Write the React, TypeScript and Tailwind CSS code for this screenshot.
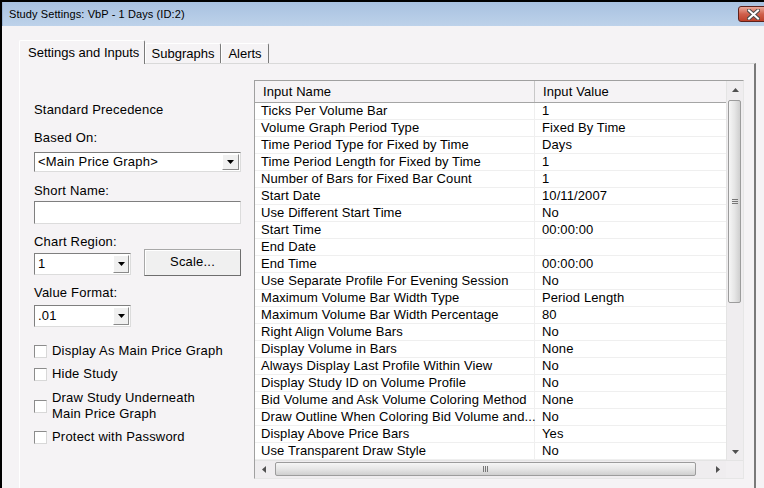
import React from "react";

const rows: [string, string][] = [
  ["Ticks Per Volume Bar", "1"],
  ["Volume Graph Period Type", "Fixed By Time"],
  ["Time Period Type for Fixed by Time", "Days"],
  ["Time Period Length for Fixed by Time", "1"],
  ["Number of Bars for Fixed Bar Count", "1"],
  ["Start Date", "10/11/2007"],
  ["Use Different Start Time", "No"],
  ["Start Time", "00:00:00"],
  ["End Date", ""],
  ["End Time", "00:00:00"],
  ["Use Separate Profile For Evening Session", "No"],
  ["Maximum Volume Bar Width Type", "Period Length"],
  ["Maximum Volume Bar Width Percentage", "80"],
  ["Right Align Volume Bars", "No"],
  ["Display Volume in Bars", "None"],
  ["Always Display Last Profile Within View", "No"],
  ["Display Study ID on Volume Profile", "No"],
  ["Bid Volume and Ask Volume Coloring Method", "None"],
  ["Draw Outline When Coloring Bid Volume and...", "No"],
  ["Display Above Price Bars", "Yes"],
  ["Use Transparent Draw Style", "No"],
];

function Tri({ dir, color = "#000" }: { dir: "up" | "down" | "left" | "right"; color?: string }) {
  const pts =
    dir === "down"
      ? "0,0 7,0 3.5,4"
      : dir === "up"
      ? "0,4 7,4 3.5,0"
      : dir === "left"
      ? "4,0 4,7 0,3.5"
      : "0,0 0,7 4,3.5";
  const w = dir === "up" || dir === "down" ? 7 : 4;
  const h = dir === "up" || dir === "down" ? 4 : 7;
  return (
    <svg width={w} height={h} viewBox={`0 0 ${w} ${h}`}>
      <polygon points={pts} fill={color} />
    </svg>
  );
}

function Select({ w, h, text, btn }: { w: string; h: string; text: string; btn: string }) {
  return (
    <div
      className={`${w} ${h} flex items-stretch bg-white border border-t-[#7f7f7f] border-l-[#7f7f7f] border-r-[#dcdcdc] border-b-[#dcdcdc] p-[1px]`}
    >
      <div className="flex-1 flex items-center pl-[2px]">{text}</div>
      <div
        className={`${btn} flex items-center justify-center bg-[#f0f0f0] border border-t-white border-l-white border-r-[#8a8a8a] border-b-[#8a8a8a]`}
      >
        <Tri dir="down" />
      </div>
    </div>
  );
}

function Check({ children }: { children: React.ReactNode }) {
  return (
    <div className="flex items-center gap-[5px]">
      <div className="w-[13px] h-[13px] shrink-0 bg-white border border-t-[#8c8c8c] border-l-[#8c8c8c] border-r-[#d8d8d8] border-b-[#d8d8d8]" />
      <div>{children}</div>
    </div>
  );
}

function LeftColumn() {
  return (
    <div className="ml-[14px] mt-[38px] w-[207px] shrink-0 flex flex-col leading-[16px] tracking-[0.2px]">
      <div className="h-[16px]">Standard Precedence</div>
      <div className="h-[16px] mt-[12px]">Based On:</div>
      <div className="mt-[6px]">
        <Select w="w-[207px]" h="h-[20px]" text={"<Main Price Graph>"} btn="w-[17px]" />
      </div>
      <div className="h-[16px] mt-[11px]">Short Name:</div>
      <div className="mt-[2px] w-[207px] h-[23px] bg-white border border-t-[#7f7f7f] border-l-[#7f7f7f] border-r-[#dcdcdc] border-b-[#dcdcdc]" />
      <div className="h-[16px] mt-[10px]">Chart Region:</div>
      <div className="flex items-start -mt-[1px]">
        <div className="mt-[4px]">
          <Select w="w-[97px]" h="h-[22px]" text="1" btn="w-[16px]" />
        </div>
        <div className="ml-[13px] w-[97px] h-[27px] flex items-center justify-center pb-[1px] bg-[#f0f0f0] border border-[#a8a8a8] border-r-[#6e6e6e] border-b-[#6e6e6e] shadow-[inset_1px_1px_0_#ffffff]">
          Scale...
        </div>
      </div>
      <div className="h-[16px] mt-[9px]">Value Format:</div>
      <div className="mt-[4px]">
        <Select w="w-[97px]" h="h-[22px]" text=".01" btn="w-[16px]" />
      </div>
      <div className="mt-[16px]">
        <Check>Display As Main Price Graph</Check>
      </div>
      <div className="mt-[7px]">
        <Check>Hide Study</Check>
      </div>
      <div className="mt-[8px]">
        <Check>
          <div>Draw Study Underneath</div>
          <div>Main Price Graph</div>
        </Check>
      </div>
      <div className="mt-[7px]">
        <Check>Protect with Password</Check>
      </div>
    </div>
  );
}

function VScroll() {
  return (
    <div className="w-[17px] flex flex-col bg-[#efedef] border-l border-[#e4e4e4]">
      <div className="h-[17px] flex items-center justify-center">
        <Tri dir="up" color="#505050" />
      </div>
      <div className="flex-1 flex flex-col">
        <div className="mt-[2px] ml-[1px] w-[13px] h-[203px] rounded-[2px] border border-[#9c9c9c] bg-linear-to-r from-[#f6f6f6] via-[#e6e6e6] to-[#cfcfcf] flex flex-col items-center justify-center gap-[1px]">
          <div className="w-[6px] h-[1px] bg-[#777]" />
          <div className="w-[6px] h-[1px] bg-[#777]" />
          <div className="w-[6px] h-[1px] bg-[#777]" />
        </div>
      </div>
      <div className="h-[17px] flex items-center justify-center">
        <Tri dir="down" color="#505050" />
      </div>
    </div>
  );
}

function HScroll() {
  return (
    <div className="h-[18px] flex bg-[#efedef] border-t border-[#e4e4e4]">
      <div className="w-[17px] flex items-center justify-center">
        <Tri dir="left" color="#505050" />
      </div>
      <div className="flex-1 flex">
        <div className="mt-[1px] ml-[3px] w-[421px] h-[14px] rounded-[2px] border border-[#9c9c9c] bg-linear-to-b from-[#f6f6f6] via-[#e6e6e6] to-[#cfcfcf] flex items-center justify-center gap-[1px]">
          <div className="w-[1px] h-[6px] bg-[#777]" />
          <div className="w-[1px] h-[6px] bg-[#777]" />
          <div className="w-[1px] h-[6px] bg-[#777]" />
        </div>
      </div>
      <div className="w-[17px] flex items-center justify-center">
        <Tri dir="right" color="#505050" />
      </div>
      <div className="w-[17px] bg-[#f1eff1]" />
    </div>
  );
}

function Table() {
  return (
    <div className="ml-[13px] mt-[16px] w-[490px] h-[399px] shrink-0 flex flex-col bg-white border border-t-[#a0a0a0] border-l-[#a0a0a0] border-r-[#e6e6e6] border-b-[#e6e6e6] tracking-[0.1px]">
      <div className="flex flex-1 min-h-0">
        <div className="flex-1 flex flex-col min-w-0">
          <div className="h-[22px] shrink-0 flex bg-[#f5f3f5] border-b border-[#a5a5a5]">
            <div className="w-[280px] pl-[8px] flex items-center border-r border-[#c8c8c8]">Input Name</div>
            <div className="flex-1 pl-[8px] flex items-center">Input Value</div>
          </div>
          {rows.map(([n, v], i) => (
            <div key={i} className="h-[17px] shrink-0 flex border-b border-[#efefef] leading-[16px]">
              <div className="w-[280px] shrink-0 pl-[6px] border-r border-[#efefef] whitespace-nowrap">{n}</div>
              <div className="flex-1 pl-[7px] whitespace-nowrap">{v}</div>
            </div>
          ))}
        </div>
        <VScroll />
      </div>
      <HScroll />
    </div>
  );
}

export default function App() {
  return (
    <div className="w-[764px] h-[488px] overflow-hidden bg-black flex flex-col font-['Liberation_Sans',Arial,sans-serif] text-black">
      <div className="h-[2px] shrink-0" />
      <div className="flex-1 ml-[2px] bg-[#f5f3f5] flex flex-col min-h-0">
        <div className="h-[24px] shrink-0 flex items-start bg-linear-to-b from-[#a8c1e0] to-[#bdd2ea] border-l border-[#9ab3d3]">
          <div className="pl-[6px] h-[24px] flex items-center text-[11px] tracking-[0.1px]">
            Study Settings: VbP - 1 Days (ID:2)
          </div>
          <div className="ml-auto -mr-[4px] mt-[4px] w-[30px] h-[16px] rounded-[3px] border border-[#5e221c] bg-linear-to-b from-[#e9a99c] via-[#d0604c] to-[#bd4029] flex items-center justify-center">
            <svg width="13" height="11" viewBox="0 0 13 11">
              <path d="M2 1.5 L11 9.5 M11 1.5 L2 9.5" stroke="#4a4a4a" strokeWidth="4" strokeLinecap="square" />
              <path d="M2 1.5 L11 9.5 M11 1.5 L2 9.5" stroke="#ffffff" strokeWidth="2" strokeLinecap="square" />
            </svg>
          </div>
        </div>
        <div className="pt-[14px] flex flex-col flex-1 min-h-0 text-[13px]">
          <div className="ml-[17px] h-[23px] shrink-0 flex items-end">
            <div className="relative z-10 -mb-[1px] h-[24px] w-[126px] pl-[8px] flex items-center bg-[#f5f3f5] border-l border-t border-white border-r border-r-[#7a7a7a] rounded-t-[2px]">
              Settings and Inputs
            </div>
            <div className="h-[20px] w-[76px] flex items-center justify-center border-l border-t border-white border-r border-r-[#7a7a7a] rounded-t-[2px]">
              Subgraphs
            </div>
            <div className="h-[20px] w-[48px] flex items-center justify-center border-l border-t border-white border-r border-r-[#7a7a7a] rounded-t-[2px]">
              Alerts
            </div>
          </div>
          <div className="ml-[17px] w-[737px] flex-1 flex items-start border-l border-t border-white border-t-[#d9d9d9] border-r-2 border-r-[#7a7a7a]">
            <LeftColumn />
            <Table />
          </div>
        </div>
      </div>
    </div>
  );
}
